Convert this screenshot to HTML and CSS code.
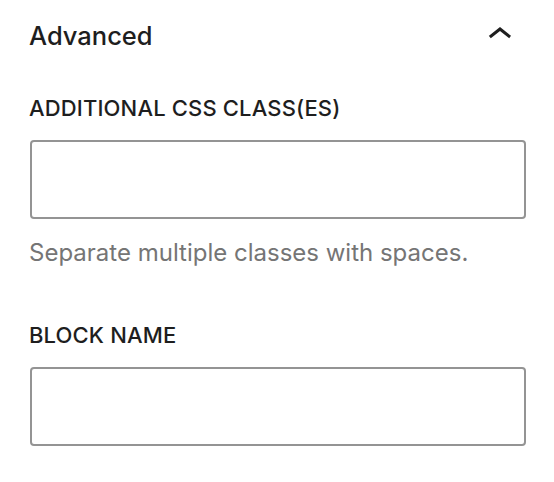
FILE: index.html
```html
<!DOCTYPE html>
<html lang="en">
<head>
  <meta charset="UTF-8">
  <meta name="viewport" content="width=device-width, initial-scale=1.0">
  <title>Advanced</title>
  <link rel="stylesheet" href="styles.css">
</head>
<body>
<div class="panel">
  <div class="panel-header">
    <h2 class="panel-title">Advanced</h2>
    <svg class="chevron" width="48" height="48" viewBox="0 0 24 24" aria-hidden="true">
      <path d="M6.5 12.4L12 8l5.5 4.4-.9 1.2L12 10l-4.6 3.6-1-1.2z"></path>
    </svg>
  </div>

  <div class="field">
    <label for="css-class">Additional CSS class(es)</label>
    <input type="text" id="css-class" name="css-class">
    <p class="help">Separate multiple classes with spaces.</p>
  </div>

  <div class="field field-name">
    <label for="block-name">Block name</label>
    <input type="text" id="block-name" name="block-name">
  </div>
</div>
</body>
</html>
```

FILE: styles.css
```css
body {
  margin: 0;
  background: #fff;
  font-family: Inter, "Noto Sans", sans-serif;
  color: #1e1e1e;
}
.panel {
  padding: 0 28px 0 30px;
}
.panel-header {
  display: flex;
  align-items: center;
  justify-content: space-between;
  height: 72px;
}
.panel-title {
  margin: 0;
  font-size: 25.5px;
  font-weight: 500;
  line-height: 1.2;
  margin-left: -1px;
}
.chevron {
  fill: #1e1e1e;
  margin-right: 2px;
  margin-top: -2px;
}
.field {
  padding-top: 21px;
}
.field-name {
  padding-top: 50px;
}
label {
  display: block;
  font-size: 22px;
  font-weight: 500;
  letter-spacing: 0.15px;
  text-transform: uppercase;
  line-height: 31px;
  margin-bottom: 16px;
  margin-left: -1px;
}
input {
  display: block;
  width: 100%;
  height: 79px;
  box-sizing: border-box;
  border: 2px solid #949494;
  border-radius: 4px;
  margin: 0;
  padding: 0 16px;
  font-size: 26px;
}
.help {
  margin: 17px 0 0 -1px;
  font-size: 24px;
  line-height: 34px;
  color: #757575;
}
```
